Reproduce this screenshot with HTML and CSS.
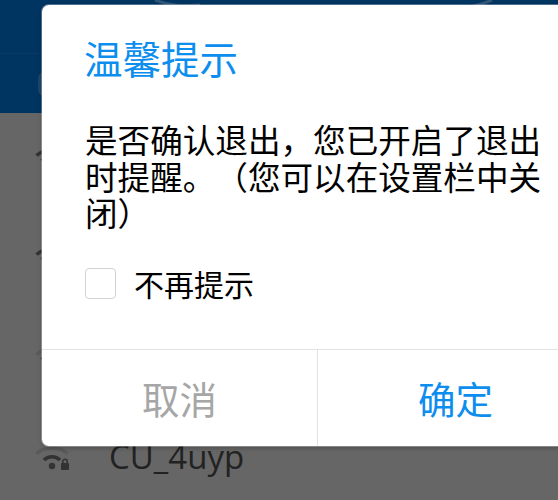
FILE: index.html
```html
<!DOCTYPE html>
<html lang="zh-CN">
<head>
  <meta charset="UTF-8" />
  <title>温馨提示</title>
  <link rel="stylesheet" href="styles.css">
</head>
<body>
  <div class="header">
    <svg class="header-ring" viewBox="0 0 558 12"><path d="M155 0C175 8 190 5 200 5M470 7C480 5 487 2 492 0"/></svg>
    <div class="status-bar"></div>
    <div class="title-bar"><span class="title-icon"></span></div>
  </div>
  <div class="wifi-list">
    <div class="wifi-row">
      <svg class="wifi-icon" viewBox="0 0 34 28"><path class="arc-mid" d="M1.5 8.5C9.5 1 24.5 1 32.5 8.5"/><path class="arc-mid" d="M6.5 13.5C11 9.5 23 9.5 27.5 13.5"/></svg>
    </div>
    <div class="wifi-row">
      <svg class="wifi-icon" viewBox="0 0 34 28"><path class="arc-mid" d="M1.5 8.5C9.5 1 24.5 1 32.5 8.5"/><path class="arc-mid" d="M6.5 13.5C11 9.5 23 9.5 27.5 13.5"/></svg>
    </div>
    <div class="wifi-row">
      <svg class="wifi-icon" viewBox="0 0 34 28"><path class="arc-far" d="M1.5 8.5C9.5 1 24.5 1 32.5 8.5"/><path class="arc-mid" d="M6.5 13.5C11 9.5 23 9.5 27.5 13.5"/></svg>
    </div>
    <div class="wifi-row">
      <svg class="wifi-icon" viewBox="0 0 34 28">
        <path class="arc-far" d="M1.5 8.5C9.5 1 24.5 1 32.5 8.5"/>
        <path class="arc-mid" d="M9 15C13 10.5 21 10.5 25 15"/>
        <circle class="dot" cx="17" cy="21" r="3.2"/>
        <rect class="dot" x="26" y="18" width="8" height="7" rx="1"/>
        <path class="shackle" d="M27.8 18.5V16.5a2.2 2.2 0 0 1 4.4 0V18.5"/>
      </svg>
      <span class="wifi-name">CU_4uyp</span>
    </div>
  </div>

  <div class="dialog">
    <div class="dialog-body">
      <h1 class="dialog-title">温馨提示</h1>
      <p class="dialog-text">是否确认退出，您已开启了退出时提醒。（您可以在设置栏中关闭）</p>
      <label class="remember">
        <span class="checkbox"></span>
        <span>不再提示</span>
      </label>
    </div>
    <div class="dialog-buttons">
      <div class="dialog-btn cancel">取消</div>
      <div class="dialog-btn confirm">确定</div>
    </div>
  </div>
</body>
</html>
```

FILE: styles.css
```css
html, body {
  height: 100%;
}
body {
  margin: 0;
  overflow: hidden;
  background-color: #666;
  font-family: "Noto Sans CJK SC", "Liberation Sans", sans-serif;
}
.header {
  position: relative;
  height: 113px;
  background-color: #003461;
}
.header-ring {
  position: absolute;
  top: 0;
  left: 0;
  width: 558px;
  height: 12px;
}
.header-ring path {
  fill: none;
  stroke: #2f5577;
  stroke-width: 3;
}
.status-bar {
  height: 53px;
  border-bottom: 1px solid #073a66;
}
.title-bar {
  display: flex;
  align-items: center;
  height: 59px;
  padding-left: 38px;
}
.title-icon {
  width: 12px;
  height: 24px;
  border-radius: 6px;
  background-color: #1d4669;
}
.wifi-list {
  margin-top: -2px;
}
.wifi-row {
  display: flex;
  align-items: center;
  gap: 40px;
  height: 99.5px;
  padding-left: 35px;
}
.wifi-icon {
  width: 34px;
  height: 28px;
  flex-shrink: 0;
}
.wifi-icon path {
  fill: none;
  stroke-width: 3.5;
}
.wifi-icon .arc-far {
  stroke: #5a5a5a;
}
.wifi-icon .arc-mid {
  stroke: #333;
}
.dot {
  fill: #333;
}
.wifi-icon .shackle {
  stroke: #333;
  stroke-width: 1.6;
}
.wifi-name {
  margin-top: -6px;
  font-family: "Open Sans", sans-serif;
  font-size: 33px;
  color: #222;
}
.dialog {
  position: absolute;
  top: 5px;
  left: 42px;
  width: 551px;
  height: 441px;
  display: flex;
  flex-direction: column;
  background: #fff;
  border-radius: 7px;
  box-shadow: 0 0 0 1px rgba(255, 255, 255, 0.3), 0 2px 5px rgba(0, 0, 0, 0.25);
}
.dialog-body {
  flex: 1;
  padding: 29px 43px 0;
}
.dialog-title {
  margin: 0;
  margin-left: -1px;
  font-size: 38.5px;
  line-height: 46px;
  font-weight: 400;
  color: #0d8eee;
}
.dialog-text {
  margin: 41px 0 0;
  width: 465px;
  font-size: 32.6px;
  line-height: 36.5px;
  color: #000;
  text-spacing-trim: space-all;
}
.remember {
  display: flex;
  align-items: center;
  gap: 18px;
  margin-top: 35px;
  font-size: 30px;
  line-height: 34px;
  color: #000;
}
.checkbox {
  width: 29px;
  height: 29px;
  margin-top: 2px;
  border: 1.5px solid #d2d2d2;
  border-radius: 4px;
}
.dialog-buttons {
  display: flex;
  height: 96px;
  border-top: 1px solid #e2e2e2;
}
.dialog-btn {
  flex: 1;
  display: flex;
  align-items: center;
  justify-content: center;
  padding-bottom: 2px;
  font-size: 37.5px;
}
.cancel {
  color: #a6a6a6;
  border-right: 1px solid #e2e2e2;
}
.confirm {
  color: #0d8eee;
}
```
